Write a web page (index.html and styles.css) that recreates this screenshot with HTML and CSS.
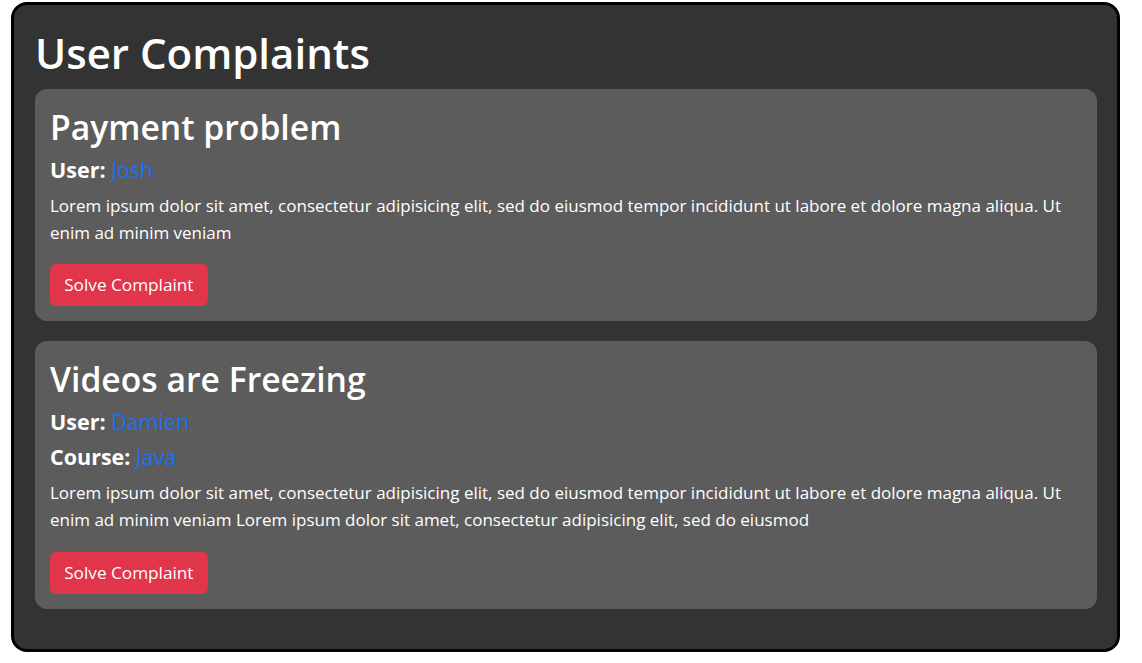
FILE: index.html
```html
<!DOCTYPE html>
<html lang="en">
<head>
<meta charset="utf-8">
<title>User Complaints</title>
<link rel="stylesheet" href="styles.css">
</head>
<body>
<main class="panel">
  <h1 class="panel-title">User Complaints</h1>
  <section class="card">
    <h2 class="card-title">Payment problem</h2>
    <h5 class="meta">User: <span class="meta-value">Josh</span></h5>
    <p class="card-text">Lorem ipsum dolor sit amet, consectetur adipisicing elit, sed do eiusmod tempor incididunt ut labore et dolore magna aliqua. Ut enim ad minim veniam</p>
    <button class="btn-danger" type="button">Solve Complaint</button>
  </section>
  <section class="card">
    <h2 class="card-title">Videos are Freezing</h2>
    <h5 class="meta">User: <span class="meta-value">Damien</span></h5>
    <h5 class="meta">Course: <span class="meta-value">Java</span></h5>
    <p class="card-text">Lorem ipsum dolor sit amet, consectetur adipisicing elit, sed do eiusmod tempor incididunt ut labore et dolore magna aliqua. Ut enim ad minim veniam Lorem ipsum dolor sit amet, consectetur adipisicing elit, sed do eiusmod</p>
    <button class="btn-danger" type="button">Solve Complaint</button>
  </section>
</main>
</body>
</html>
```
FILE: styles.css
```css
* { box-sizing: border-box; }

html, body {
  margin: 0;
  padding: 0;
  background: #ffffff;
}

body {
  font-family: "Open Sans", "Noto Sans", sans-serif;
  font-size: 17px;
  line-height: 27px;
  color: #ffffff;
  padding: 2px 22px 10px 11px;
}

.panel {
  background: #333333;
  border: 3px solid #000000;
  border-radius: 16px;
  padding: 22px 20px 20px 21px;
}

.panel-title {
  margin: 0 0 8.8px;
  font-size: 42px;
  line-height: 52.8px;
  font-weight: 600;
}

.card {
  background: #5c5c5c;
  border-radius: 12px;
  padding: 17px 15px 15px;
  margin-bottom: 20px;
}

.card-title {
  margin: 0 0 8.8px;
  font-size: 33.7px;
  line-height: 42.24px;
  font-weight: 600;
}

.meta {
  margin: 0 0 8.8px;
  font-size: 21.5px;
  line-height: 26.4px;
  font-weight: 700;
}

.meta-value {
  color: #1a6ff5;
  font-weight: 500;
}

.card-text {
  margin: 1px 0 18.6px;
  line-height: 27px;
}

.btn-danger {
  display: block;
  font-family: inherit;
  font-size: 17.2px;
  line-height: 26.4px;
  color: #ffffff;
  background: #e0354b;
  border: 1px solid #e0354b;
  border-radius: 6px;
  padding: 6.6px 13.2px;
  cursor: pointer;
}
```
